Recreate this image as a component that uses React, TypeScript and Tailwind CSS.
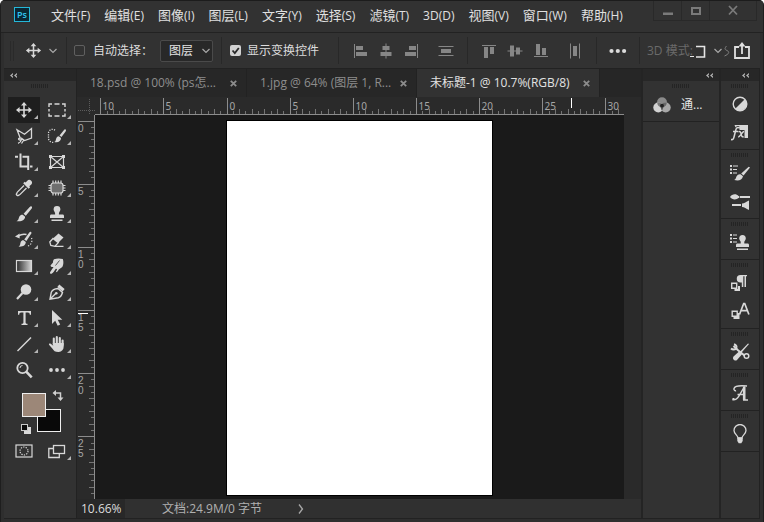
import React from 'react';

const menus = [
  { id: 1, name: '文件', key: '(F)' },
  { id: 2, name: '编辑', key: '(E)' },
  { id: 3, name: '图像', key: '(I)' },
  { id: 4, name: '图层', key: '(L)' },
  { id: 5, name: '文字', key: '(Y)' },
  { id: 6, name: '选择', key: '(S)' },
  { id: 7, name: '滤镜', key: '(T)' },
  { id: 8, name: '', key: '3D(D)' },
  { id: 9, name: '视图', key: '(V)' },
  { id: 10, name: '窗口', key: '(W)' },
  { id: 11, name: '帮助', key: '(H)' },
];

const docTabs = [
  { id: 1, title: '18.psd @ 100% (ps怎...', active: false, width: 'w-[170px]' },
  { id: 2, title: '1.jpg @ 64% (图层 1, R...', active: false, width: 'w-[170px]' },
  { id: 3, title: '未标题-1 @ 10.7%(RGB/8)', active: true, width: 'w-[183px]' },
];

type IconProps = { children: React.ReactNode; className?: string };

const Icon = ({ children, className = 'size-5' }: IconProps) => (
  <svg viewBox="0 0 20 20" className={className} fill="currentColor" stroke="none" aria-hidden="true">
    {children}
  </svg>
);

const MoveIcon = ({ className }: { className?: string }) => (
  <Icon className={className}>
    <path d="M9.2 5h1.6v4.2H15v1.6h-4.2V15H9.2v-4.200H5V9.200h4.200z" />
    <path d="M10 2l3 3.600H7zM10 18l3-3.600H7zM2 10l3.600-3v6zM18 10l-3.600-3v6z" />
  </Icon>
);

const Brush = () => (
  <>
    <path d="M17.600 2.400c.8.6.5 1.500-.1 2.300l-5.700 7-2.200-1.900 6.100-6.900c.6-.7 1.300-1 1.900-.5z" />
    <path d="M8.800 10.700l2.300 2c-.1 3-3 5.300-8.600 4.500 2.400-.9 1.900-2.700 2.900-4.600.8-1.500 2-2.100 3.400-1.900z" />
  </>
);

const Stamp = () => (
  <>
    <path d="M10 2a3.400 3.400 0 0 1 3.400 3.400c0 1.600-1.500 2.500-1.500 4v1.200h3.600c1 0 1.500.6 1.500 1.500V14H3v-1.900c0-.9.500-1.500 1.500-1.500h3.600V9.400c0-1.500-1.500-2.400-1.500-4A3.400 3.400 0 0 1 10 2z" />
    <path d="M4.500 15.500h11V17h-11z" />
  </>
);

const tools = [
  { id: 'move', more: true, icon: <MoveIcon /> },
  {
    id: 'marquee',
    more: true,
    icon: (
      <Icon>
        <path d="M2 7V4h3M7.500 4h5M15 4h3v3M18 9v2.500M18 13.500V16h-3M12.500 16h-5M5 16H2v-2.500M2 11.500V9" fill="none" stroke="currentColor" strokeWidth="1.400" />
      </Icon>
    ),
  },
  {
    id: 'lasso',
    more: true,
    icon: (
      <Icon>
        <path d="M6.500 12.800L3 3.800l7.500 4.400L17.500 2.500v9.500l-7 2.500-2.600-1.900M8 12.600c-1.500-1.300-3.800-.5-3.400.7.400 1.200 3.400.7 3.700-.4M7.300 14c-.3 1.600-1.300 2.700-3.300 3.300M9.500 14.500L7.500 17.500" fill="none" stroke="currentColor" strokeWidth="1.300" />
      </Icon>
    ),
  },
  {
    id: 'quick-select',
    more: true,
    icon: (
      <Icon>
        <path d="M8 4.200A4 4 0 0 0 1.500 7v5a4.300 4.300 0 0 0 5 4.300" fill="none" stroke="currentColor" strokeWidth="1.300" strokeDasharray="1.200 1.200" />
        <path d="M18.600 3.500c.7.500.4 1.300 0 2l-4.100 5.600-2-1.700 4.500-5.500c.5-.6 1.100-.8 1.600-.4z" />
        <path d="M11.800 10.200l2.200 1.900c0 3-2.600 4.900-6.800 4 1.800-.8 1.400-2.100 2.100-3.900.5-1.300 1.300-2 2.500-2z" />
      </Icon>
    ),
  },
  {
    id: 'crop',
    more: true,
    icon: (
      <Icon>
        <path d="M1 4.800h3M6.500 1.500v13h7.500M8.500 4.800h5.700V18M16 14.500h2.500" fill="none" stroke="currentColor" strokeWidth="2" />
      </Icon>
    ),
  },
  {
    id: 'frame',
    more: false,
    icon: (
      <Icon>
        <path d="M3.500 4.500h13v11h-13zM3.500 4.500l13 11M16.500 4.500l-13 11" fill="none" stroke="currentColor" strokeWidth="1.200" />
        <path d="M2 3h3v3H2zM15 3h3v3h-3zM2 14h3v3H2zM15 14h3v3h-3z" />
      </Icon>
    ),
  },
  {
    id: 'eyedropper',
    more: true,
    icon: (
      <Icon>
        <path d="M17.200 2.800c1.400 1.300 1 3-.2 4l-1.700 1.500.8.9-1.500 1.500-5.400-5.400 1.500-1.500.9.800 1.500-1.700c1.100-1.200 2.800-1.500 4.100-.1z" />
        <path d="M10 7.500l-6.400 6.400c-.7.7-.6 1.500-1.300 2.300.3.900.7 1.200 1.500 1.500.8-.7 1.600-.6 2.300-1.300l6.400-6.400" fill="none" stroke="currentColor" strokeWidth="1.300" />
      </Icon>
    ),
  },
  {
    id: 'patch',
    more: true,
    icon: (
      <Icon>
        <rect x="4" y="5" width="12" height="10" rx="2.500" fill="#6e6e6e" stroke="currentColor" strokeWidth="1.200" />
        <path d="M6 2.500V5M8.700 2.500V5M11.300 2.500V5M14 2.500V5M6 15v2.500M8.700 15v2.500M11.300 15v2.500M14 15v2.500M1.500 7.500H4M1.500 10H4M1.500 12.500H4M16 7.500h2.500M16 10h2.500M16 12.500h2.500" fill="none" stroke="currentColor" strokeWidth="1.200" />
      </Icon>
    ),
  },
  { id: 'brush', more: true, icon: <Icon><Brush /></Icon> },
  { id: 'stamp', more: true, icon: <Icon><Stamp /></Icon> },
  {
    id: 'history-brush',
    more: true,
    icon: (
      <Icon>
        <path d="M17 2c.8.500.5 1.300 0 2.100l-4.600 7-2.200-1.700 5.100-6.900c.5-.6 1.100-.9 1.700-.5z" />
        <path d="M9.500 10.200l2.300 1.800c-.1 3.200-2.800 5-7.300 4.600 2.100-1 1.400-2.700 2.200-4.600.6-1.300 1.500-1.900 2.800-1.800z" />
        <path d="M4.500 6c3-2.200 5.500-2 8-1.500" fill="none" stroke="currentColor" strokeWidth="1.300" />
        <path d="M1 6.500L5.600 3.500v5z" />
        <path d="M17.500 8c.8 2.500.5 6.500-3.500 8" fill="none" stroke="currentColor" strokeWidth="1.300" strokeDasharray="1.200 1.600" />
      </Icon>
    ),
  },
  {
    id: 'eraser',
    more: true,
    icon: (
      <Icon>
        <path d="M11.500 3.500l5 4-5.200 5.200-5.300-4.200z" />
        <path d="M6 8.500L2.800 12l1 3.500 4.200.8 3.300-3.600z" fill="none" stroke="currentColor" strokeWidth="1.300" />
        <path d="M8 15.800h8.500V17H7z" />
      </Icon>
    ),
  },
  {
    id: 'gradient',
    more: true,
    icon: (
      <Icon>
        <defs>
          <linearGradient id="tool-gradient">
            <stop offset="0" stopColor="#2a2a2a" />
            <stop offset="1" stopColor="#d6d6d6" />
          </linearGradient>
        </defs>
        <rect x="2.500" y="4.500" width="15" height="11" fill="url(#tool-gradient)" stroke="currentColor" strokeWidth="1.200" />
      </Icon>
    ),
  },
  {
    id: 'smudge',
    more: true,
    icon: (
      <Icon>
        <path d="M7 3.200C10 2 13.500 2.300 15.800 3c1 2.500.7 6-.5 8l-3.500 2.500c-.8 1.600-1.700 2.600-3 2.700l1.300-3.300-1.200-.2c-1.400 1.600-2.300 4-4.300 5-1.300.5-2-.5-1.400-1.700l3.300-5c-1.800.2-2.700-.3-3-1.500L6 6.500c0-1.300.2-2.500 1-3.300z" />
        <path d="M12.500 4.500l-4 5" fill="none" stroke="#323232" strokeWidth=".8" />
      </Icon>
    ),
  },
  {
    id: 'dodge',
    more: true,
    icon: (
      <Icon>
        <circle cx="12" cy="7.500" r="5.300" />
        <path d="M8.500 11L3 17" stroke="currentColor" strokeWidth="2.200" />
      </Icon>
    ),
  },
  {
    id: 'pen',
    more: true,
    icon: (
      <Icon>
        <path d="M11 6.500l4.500 4c-.8 2.800-2 4.700-4.200 5.300L3 17.200l1.300-7c1-2.300 3.500-3.500 6.700-3.700zM3.200 17l5.500-5.500" fill="none" stroke="currentColor" strokeWidth="1.400" />
        <circle cx="9.300" cy="11.200" r="1.300" />
        <path d="M12.300 2.500l5.300 4.500-2 2.500L10.300 5z" />
      </Icon>
    ),
  },
  {
    id: 'type',
    more: true,
    icon: (
      <Icon>
        <path d="M4 3h13v3.800h-1.200c-.1-1.600-.6-2.300-2-2.300h-2.200v9.900c0 .9.500 1.300 1.900 1.400V17h-6v-1.200c1.400-.1 1.900-.5 1.900-1.400V4.500H7.200c-1.400 0-1.900.7-2 2.300H4z" />
      </Icon>
    ),
  },
  {
    id: 'path-select',
    more: true,
    icon: (
      <Icon>
        <path d="M5 2v14l3.200-3.200 2.500 5 2.500-1.200-2.500-4.800h4.600z" />
      </Icon>
    ),
  },
  {
    id: 'line',
    more: true,
    icon: (
      <Icon>
        <path d="M3.500 17L17 3.500" stroke="currentColor" strokeWidth="1.400" />
      </Icon>
    ),
  },
  {
    id: 'hand',
    more: true,
    icon: (
      <Icon>
        <path d="M6.800 10.500V4.500M9.800 10V3M12.800 10V4M15.600 11V6.500" fill="none" stroke="currentColor" strokeWidth="2.100" strokeLinecap="round" />
        <path d="M5.700 9h11v3.500c0 3.200-2 5.300-5 5.500-3.500.1-5-1.300-6.200-3.300L2 10.700c-.4-1 .8-1.700 1.700-1l2.600 2z" />
      </Icon>
    ),
  },
  {
    id: 'zoom',
    more: false,
    icon: (
      <Icon>
        <circle cx="8.500" cy="8" r="5.200" fill="none" stroke="currentColor" strokeWidth="1.800" />
        <path d="M6 8a2.500 2.500 0 0 1 2.500-2.500" fill="none" stroke="currentColor" strokeWidth="1" />
        <path d="M12.200 11.700l5.500 5.600" stroke="currentColor" strokeWidth="2.600" />
      </Icon>
    ),
  },
  {
    id: 'more',
    more: true,
    icon: (
      <Icon>
        <circle cx="4" cy="10" r="1.900" />
        <circle cx="10" cy="10" r="1.900" />
        <circle cx="16" cy="10" r="1.900" />
      </Icon>
    ),
  },
];

const alignLeft = [
  { id: 'align-left', d: 'M3 3h1v14H3zM5 5h7v4H5zM5 11h11v4H5z' },
  { id: 'align-center', d: 'M9.500 2.500h1v15h-1zM6.500 5h7v4h-7zM4.500 11h11v4h-11z' },
  { id: 'align-right', d: 'M16 3h1v14h-1zM8 5h7v4H8zM4 11h11v4H4z' },
];

const alignTop = [
  { id: 'align-top', d: 'M3 4h14v1H3zM5 6h4v11H5zM11 6h4v7h-4z' },
  { id: 'align-middle', d: 'M2.500 9.500h15v1h-15zM5 4.500h4v11H5zM11 6.500h4v7h-4z' },
  { id: 'align-bottom', d: 'M3 15h14v1H3zM5 3h4v11H5zM11 7h4v7h-4z' },
];

const panelGroups = [
  {
    id: 'adjust',
    items: [
      {
        id: 'adjustments',
        icon: (
          <Icon>
            <circle cx="10" cy="10" r="6.800" fill="none" stroke="currentColor" strokeWidth="1.400" />
            <path d="M14.800 5.200a6.800 6.800 0 0 1-9.600 9.600z" />
          </Icon>
        ),
      },
      {
        id: 'styles',
        icon: (
          <Icon>
            <path d="M4.500 3H18v13h-3.500V8H9.500V6.500H6z" />
            <path d="M1 17.500c1.800.5 2.500-.5 3-2.500L5.800 8c.5-2 1.500-2.800 3.200-2.300M3 9.500h5M8.500 9.700c1.800-.5 2.300.3 2.700 2.500s1 3 2.500 2.500M14 9.600c-2 .2-3.500 5.200-5.800 5.300" fill="none" stroke="#323232" strokeWidth="3" />
            <path d="M1 17.500c1.800.5 2.500-.5 3-2.500L5.800 8c.5-2 1.500-2.800 3.200-2.300M3 9.500h5M8.500 9.700c1.800-.5 2.300.3 2.700 2.500s1 3 2.500 2.500M14 9.600c-2 .2-3.500 5.200-5.800 5.300" fill="none" stroke="currentColor" strokeWidth="1.500" />
          </Icon>
        ),
      },
    ],
  },
  {
    id: 'brushes',
    items: [
      {
        id: 'brush-settings',
        icon: (
          <svg viewBox="0 0 22 20" className="h-5 w-[22px]" fill="currentColor" aria-hidden="true">
            <path d="M1 2h2v2H1zM4 2.500h5v1H4zM1 5.500h2v2H1zM4 6h4v1H4zM1 9h2v2H1zM4 9.500h4v1H4z" />
            <path d="M21 4.500l-6.500 8-2.300-2 7.500-6.700z" />
            <path d="M11.500 11.200l2.500 2.100c-1 4-4.500 4.700-8.800 3.700 1.800-.7 1.500-2 2.400-3.700.9-1.700 2.300-2.400 3.900-2.100z" />
          </svg>
        ),
      },
      {
        id: 'brush-presets',
        icon: (
          <Icon>
            <path d="M0 6c2-3.500 6.500-3.500 8.500-1h.8v2h-.8C6.500 9 2 9 0 6zM10 5h10v2H10zM2 13h9v2H2zM12 12.500c2.500 0 4-1.500 7-3v9.500c-3-1.300-4.500-3-7-3z" />
          </Icon>
        ),
      },
    ],
  },
  {
    id: 'clone',
    items: [
      {
        id: 'clone-source',
        icon: (
          <svg viewBox="0 0 22 20" className="h-5 w-[22px]" fill="currentColor" aria-hidden="true">
            <path d="M1 2h2v2H1zM4 2.500h4v1H4zM1 5.500h2v2H1zM4 6h4v1H4zM1 9h2v2H1zM4 9.500h4v1H4z" />
            <path d="M13.500 3a3.400 3.400 0 0 1 3.300 3.400c0 1.500-1.500 2.300-1.500 3.600v1.500h3.200c1 0 1.500.6 1.500 1.500v2H7v-2c0-.9.500-1.500 1.500-1.500h3.200V10c0-1.300-1.500-2.100-1.500-3.600A3.400 3.400 0 0 1 13.500 3zM8 16.500h11V18H8z" />
          </svg>
        ),
      },
    ],
  },
  {
    id: 'text',
    items: [
      {
        id: 'paragraph-styles',
        icon: (
          <Icon>
            <path d="M10.500 2H17v1.200h-1V14h-1.500V3.200h-1.200V14h-1.500V9.500h-1.300a3.700 3.700 0 0 1 0-7.500z" />
            <path d="M5 13h5v5H4.500v-2H8v-3z" />
            <path d="M1.700 10.200h5v5h-5z" fill="none" stroke="currentColor" strokeWidth="1.400" />
          </Icon>
        ),
      },
      {
        id: 'character-styles',
        icon: (
          <Icon>
            <path d="M9.500 13.500L13.700 2.500h1l4.200 11M11 9.700h6.400" fill="none" stroke="currentColor" strokeWidth="1.700" />
            <path d="M7 12h2.500v6H3.500v-2H7z" />
            <path d="M2.200 10.200h5v5h-5z" fill="none" stroke="currentColor" strokeWidth="1.400" />
          </Icon>
        ),
      },
    ],
  },
  {
    id: 'presets',
    items: [
      {
        id: 'tool-presets',
        icon: (
          <Icon>
            <path d="M19 2l-8.300 9.500-1.200-1.200L18 1.500z" />
            <path d="M9 9.500l3 2.800-5 5.700c-2 1.700-5.300-1-3.500-3.500z" />
            <path d="M3.500 4L8 8.300l6.500 5.200" fill="none" stroke="currentColor" strokeWidth="2" />
            <path d="M1 6.500c1.500 1.300 4.500 1.300 5.300-.3C7 4.600 6 2.800 4 2.200" fill="none" stroke="currentColor" strokeWidth="2" />
            <circle cx="16.500" cy="14" r="2.300" fill="none" stroke="currentColor" strokeWidth="1.500" />
          </Icon>
        ),
      },
    ],
  },
  {
    id: 'glyph',
    items: [
      {
        id: 'glyphs',
        icon: (
          <Icon>
            <path d="M2.500 16.800c3 .6 5-1.300 6.700-4.200l5-8.600M14.300 3.500v13M13 17h5M7.500 11.500h7M17 3c-5-.5-12-.8-13 2.500-.4 1.700 1 2.500 2 2" fill="none" stroke="currentColor" strokeWidth="1.400" />
            <path d="M12.900 4h2.600v13h-2.600zM2.500 15h2v2h-2z" />
          </Icon>
        ),
      },
    ],
  },
  {
    id: 'learn',
    items: [
      {
        id: 'tips',
        icon: (
          <Icon>
            <path d="M8 14c0-2.500-4-4-4-7.500a6 6 0 0 1 12 0c0 3.500-4 5-4 7.500z" fill="none" stroke="currentColor" strokeWidth="1.300" />
            <path d="M7.300 13.500h5.400V17l-1.400 2.300H8.700L7.300 17z" />
          </Icon>
        ),
      },
    ],
  },
];

const Grip = () => (
  <svg className="mx-auto mt-[3px] block h-1 w-[18px]" aria-hidden="true">
    <path d="M0 2h18" stroke="#242424" strokeWidth="4" strokeDasharray="1 1" />
  </svg>
);

const Collapse = () => (
  <svg viewBox="0 0 7 5" className="h-[5px] w-[7px]" fill="#b4b4b4" aria-hidden="true">
    <path d="M3 0v1.500l-1 1 1 1V5L0 2.500zM7 0v1.500l-1 1 1 1V5L4 2.500z" />
  </svg>
);

const Chevron = () => (
  <svg viewBox="0 0 8 6" className="h-[6px] w-2" fill="none" stroke="#a8a8a8" strokeWidth="1.200" aria-hidden="true">
    <path d="M.5 1L4 4.500 7.500 1" />
  </svg>
);

// one ruler unit is 12.63px, a half unit tick sits between two units
const UNIT = 12.63;

const HorizontalRuler = () => {
  const ticks = [];
  for (let i = -20; i <= 62; i++) {
    const x = Math.floor(132 + (i * UNIT) / 2) + 0.5;
    const major = i % 10 === 0;
    ticks.push(
      <g key={i}>
        <path d={`M${x} ${major ? 1 : i % 2 === 0 ? 12 : 14}V17`} stroke={major ? '#8c8c8c' : '#747474'} />
        {major && (
          <text x={x + 2} y="13" fontSize="10" fill="#a6a6a6">{Math.abs(i / 2)}</text>
        )}
      </g>
    );
  }
  return (
    <svg className="block h-[18px] w-full overflow-hidden bg-[#2a2a2a]" fontFamily="Noto Sans, sans-serif">
      {ticks}
      <path d="M0 17.500h2000" stroke="#8c8c8c" />
      <path d="M476.500 1v10" stroke="#ffffff" />
    </svg>
  );
};

const VerticalRuler = () => {
  const ticks = [];
  for (let i = -1; i <= 59; i++) {
    const y = Math.floor(6 + (i * UNIT) / 2) + 0.5;
    const major = i % 10 === 0;
    ticks.push(
      <g key={i}>
        <path d={`M${major ? 1 : i % 2 === 0 ? 12 : 14} ${y}H17`} stroke={major ? '#8c8c8c' : '#747474'} />
        {major && String(i / 2).split('').map((n, k) => (
          <text key={k} x="1" y={y + 10 + k * 10} fontSize="10" fill="#a6a6a6">{n}</text>
        ))}
      </g>
    );
  }
  return (
    <svg className="block h-full w-[18px] overflow-hidden bg-[#2a2a2a]" fontFamily="Liberation Sans, sans-serif">
      {ticks}
      <path d="M17.500 0v2000" stroke="#8c8c8c" />
      <path d="M1 198.500h10" stroke="#ffffff" />
    </svg>
  );
};

const TitleBar = () => (
  <header className="flex h-[33px] shrink-0 items-start border-t border-b border-t-[#1c1c1c] border-b-[#222222] bg-[#323232] pr-[6px] pl-[13px]">
    <div className="mt-[6px] flex h-[15px] w-4 items-center justify-center border border-[#25b7d8] bg-[#0a2733] text-[9px] leading-none font-semibold text-[#31c5f0]">
      Ps
    </div>
    <nav className="ml-[21px] flex gap-[14px] text-[13px] leading-[28px] whitespace-nowrap text-[#e0e0e0]">
      {menus.map((menu) => (
        <button key={menu.id} type="button">
          {menu.name}
          <span className="text-xs">{menu.key}</span>
        </button>
      ))}
    </nav>
    <div className="ml-auto flex h-5 border-x border-b border-[#292929] text-[#7a7a7a]">
      <button type="button" aria-label="最小化" className="flex w-7 items-center justify-center border-r border-[#292929]">
        <svg viewBox="0 0 20 20" className="size-5" fill="currentColor"><path d="M5 11.500h10V14H5z" /></svg>
      </button>
      <button type="button" aria-label="最大化" className="flex w-7 items-center justify-center border-r border-[#292929]">
        <svg viewBox="0 0 20 20" className="size-5" fill="none" stroke="currentColor" strokeWidth="2"><path d="M6 7h8v6H6z" /></svg>
      </button>
      <button type="button" aria-label="关闭" className="flex w-[46px] items-center justify-center">
        <svg viewBox="0 0 20 20" className="size-5" stroke="currentColor" strokeWidth="1.800"><path d="M6 5l8 8.500M14 5l-8 8.500" /></svg>
      </button>
    </div>
  </header>
);

const OptionsBar = () => (
  <section className="flex h-9 shrink-0 items-center border-b border-[#222222] bg-[#323232] text-xs text-[#dcdcdc]">
    <div className="flex h-[27px] w-[63px] shrink-0 items-center border-r border-[#282828]">
      <span className="ml-[6px] h-5 w-1 border-x border-[#2a2a2a]" />
      <button type="button" aria-label="移动工具" className="ml-[10px] text-[#d8d8d8]"><MoveIcon className="size-[19px]" /></button>
      <button type="button" aria-label="工具预设" className="ml-[6px]"><Chevron /></button>
    </div>
    <div className="flex h-[27px] w-[155px] shrink-0 items-center border-r border-[#282828]">
      <label className="ml-[7px] flex items-center gap-2 whitespace-nowrap">
        <input type="checkbox" className="size-[11px] appearance-none rounded-[2px] border border-[#606060]" />
        <span className="w-[56px]">自动选择：</span>
      </label>
      <div className="relative ml-[11px] flex items-center">
        <select aria-label="自动选择对象" className="h-[22px] w-[53px] appearance-none rounded-[2px] border border-[#4a4a4a] bg-[#282828] pl-2 text-xs text-[#e4e4e4]">
          <option>图层</option>
        </select>
        <span className="pointer-events-none absolute right-[3px]"><Chevron /></span>
      </div>
    </div>
    <div className="flex h-[27px] w-[117px] shrink-0 items-center border-r border-[#282828]">
      <label className="ml-2 flex items-center gap-[6px] whitespace-nowrap">
        <span className="relative flex items-center">
          <input type="checkbox" defaultChecked className="size-[11px] appearance-none rounded-[2px] bg-[#d2d2d2]" />
          <svg viewBox="0 0 11 11" className="pointer-events-none absolute size-[11px]" fill="none" stroke="#2a2a2a" strokeWidth="1.800"><path d="M2.500 5.500L4.800 8l4-5" /></svg>
        </span>
        显示变换控件
      </label>
    </div>
    <div className="flex h-[27px] w-[129px] shrink-0 items-center gap-[5px] border-r border-[#282828] pl-3 text-[#868686]">
      {alignLeft.map((a) => (
        <button key={a.id} type="button" aria-label={a.id}><Icon><path d={a.d} /></Icon></button>
      ))}
      <button type="button" aria-label="distribute-vertical" className="ml-[10px]">
        <Icon><path d="M2.500 5h15v1h-15zM5 8h10v4H5zM2.500 14h15v1h-15z" /></Icon>
      </button>
    </div>
    <div className="flex h-[27px] w-[129px] shrink-0 items-center gap-[6px] border-r border-[#282828] pl-[11px] text-[#868686]">
      {alignTop.map((a) => (
        <button key={a.id} type="button" aria-label={a.id}><Icon><path d={a.d} /></Icon></button>
      ))}
      <button type="button" aria-label="distribute-horizontal" className="ml-2">
        <Icon><path d="M5 2.500h1v15H5zM8 5h4v10H8zM14 2.500h1v15h-1z" /></Icon>
      </button>
    </div>
    <div className="flex h-[27px] w-[43px] shrink-0 items-center justify-center border-r border-[#282828]">
      <button type="button" aria-label="对齐选项">
        <Icon>
          <circle cx="3.500" cy="10" r="2.100" />
          <circle cx="9.800" cy="10" r="2.100" />
          <circle cx="16.100" cy="10" r="2.100" />
        </Icon>
      </button>
    </div>
    <div className="flex min-w-0 flex-1 items-center pl-[7px] text-[#6a6a6a]">
      <span className="w-[43px] shrink-0 whitespace-nowrap">3D 模式:</span>
      <svg viewBox="0 0 16 16" className="size-4 shrink-0" fill="none" stroke="#e6e6e6" strokeWidth="1.600" aria-hidden="true">
        <path d="M6 3.500h8.500V14H6" />
        <path d="M0 13.500h4" strokeWidth="1" />
      </svg>
      <span className="ml-2 shrink-0"><Chevron /></span>
      <svg viewBox="0 0 8 12" className="h-3 w-2 shrink-0" fill="none" stroke="#808080" aria-hidden="true">
        <path d="M4.500 1c-2 2.500-2 3.500.5 4.500 3 1.500 2 3.500-2.500 5.500" />
      </svg>
      <button type="button" aria-label="共享" className="ml-auto pr-[9px] text-[#e0e0e0]">
        <svg viewBox="0 0 18 18" className="size-[18px]" fill="none" stroke="currentColor" strokeWidth="1.800">
          <path d="M6 5H2v11h14V5h-4M9 12V3" />
          <path d="M5.500 4.500L9 0l3.500 4.500z" fill="currentColor" stroke="none" />
        </svg>
      </button>
    </div>
  </section>
);

const ToolPanel = () => (
  <aside className="flex w-[73px] shrink-0 flex-col border-r border-[#222222] bg-[#323232] text-[#d8d8d8]">
    <div className="flex h-3 items-center bg-[#272727] pl-[6px]"><Collapse /></div>
    <Grip />
    <div className="mt-[9px] ml-1 grid grid-cols-[33px_33px]">
      {tools.map((tool) => (
        <button
          key={tool.id}
          type="button"
          aria-label={tool.id}
          className={tool.id === 'move'
            ? 'relative flex h-[26px] w-8 items-center justify-center bg-[#1e1e1e]'
            : 'relative flex h-[26px] w-8 items-center justify-center'}
        >
          {tool.icon}
          {tool.more && (
            <svg viewBox="0 0 4 4" className="absolute right-[2px] bottom-1 size-1" fill="#b4b4b4"><path d="M4 0v4H0z" /></svg>
          )}
        </button>
      ))}
    </div>
    <svg viewBox="0 0 48 46" className="mt-[5px] ml-[15px] h-[46px] w-12" aria-label="前景色和背景色">
      <path d="M36.500 5H41.500v5" fill="none" stroke="#d0d0d0" strokeWidth="1.500" />
      <path d="M37 2v6l-3.500-3zM38.500 9.500h6l-3 3.500z" fill="#d0d0d0" />
      <rect x="18.500" y="21.500" width="23" height="22" fill="#090909" stroke="#eeeeee" />
      <rect x="3.500" y="5.500" width="23" height="23" fill="#9c8778" stroke="#eeeeee" />
      <path d="M9 39h3v7H5v-3h4z" fill="#d8d8d8" />
      <rect x="2.500" y="36.500" width="6" height="6" fill="#0a0a0a" stroke="#c8c8c8" />
    </svg>
    <div className="mt-1 ml-1 grid grid-cols-[33px_33px]">
      <button type="button" aria-label="快速蒙版" className="flex h-[26px] w-8 items-center justify-center">
        <Icon>
          <rect x="2" y="4" width="16" height="12" fill="none" stroke="currentColor" strokeWidth="1.200" />
          <circle cx="10" cy="10" r="4" fill="none" stroke="currentColor" strokeWidth="1.200" strokeDasharray="1.300 1.210" />
        </Icon>
      </button>
      <button type="button" aria-label="屏幕模式" className="relative flex h-[26px] w-8 items-center justify-center">
        <Icon>
          <path d="M6 7.500H1.800v9h10.500V13" fill="none" stroke="currentColor" strokeWidth="1.300" />
          <rect x="6.500" y="4.500" width="11" height="8" fill="none" stroke="currentColor" strokeWidth="1.300" />
        </Icon>
        <svg viewBox="0 0 4 4" className="absolute right-[2px] bottom-1 size-1" fill="#b4b4b4"><path d="M4 0v4H0z" /></svg>
      </button>
    </div>
  </aside>
);

const Workspace = () => (
  <main className="flex min-w-0 flex-1 flex-col bg-[#262626]">
    <div className="flex h-7 shrink-0 text-xs">
      {docTabs.map((tab) => (
        <div
          key={tab.id}
          className={`flex items-center justify-between border-r border-[#222222] pr-[9px] pl-[13px] whitespace-nowrap ${tab.width} ${
            tab.active ? 'bg-[#323232] text-[#e2e2e2]' : 'bg-[#272727] text-[#8e8e8e]'
          }`}
        >
          <button type="button">{tab.title}</button>
          <button type="button" aria-label="关闭">
            <svg viewBox="0 0 7 7" className="size-[7px]" stroke="#8c8c8c" strokeWidth="1.800"><path d="M.8.8l5.400 5.400M6.200.8L.8 6.200" /></svg>
          </button>
        </div>
      ))}
    </div>
    <div className="grid min-h-0 flex-1 grid-cols-[18px_1fr_17px] grid-rows-[18px_1fr_19px]">
      <svg className="block size-[18px] bg-[#2a2a2a]">
        <path d="M12.500 2v16M1 13.500h17" stroke="#5c5c5c" strokeDasharray="1 1" />
      </svg>
      <HorizontalRuler />
      <div className="bg-[#2a2a2a]" />
      <VerticalRuler />
      <div className="flex items-center justify-center bg-[#1a1a1a] pt-[2px]">
        <div className="aspect-[265/374] h-[374px] bg-white outline outline-black" />
      </div>
      <div className="bg-[#2a2a2a]" />
      <div className="col-span-3 flex min-h-0 items-center bg-[#2c2c2c] text-xs">
        <input aria-label="缩放" defaultValue="10.66%" className="h-full w-12 bg-[#282828] pl-1 text-[#dcdcdc]" />
        <div className="flex h-full flex-1 items-center bg-[#303030] pl-[37px] text-[#b0b0b0]">
          <span className="w-[136px] whitespace-nowrap">文档:24.9M/0 字节</span>
          <button type="button" aria-label="状态信息">
            <svg viewBox="0 0 6 10" className="h-[10px] w-[6px]" fill="none" stroke="#a8a8a8" strokeWidth="1.300"><path d="M1 .5L4.500 5 1 9.500" /></svg>
          </button>
        </div>
      </div>
    </div>
  </main>
);

const SidePanels = () => (
  <>
    <aside className="flex w-20 shrink-0 flex-col border-x-2 border-[#242424] bg-[#323232]">
      <div className="flex h-3 shrink-0 items-center justify-end bg-[#272727] pr-[6px]"><Collapse /></div>
      <div className="h-[41px] shrink-0 border-b border-[#222222]">
        <Grip />
        <button type="button" className="mt-[3px] flex h-7 items-center gap-[9px] pl-[9px] text-xs text-[#e4e4e4]">
          <svg viewBox="0 0 20 20" className="size-5" aria-hidden="true">
            <circle cx="10" cy="7.300" r="5" fill="#8a8a8a" />
            <circle cx="6.300" cy="12.500" r="5" fill="#d2d2d2" />
            <circle cx="13.700" cy="12.500" r="5" fill="#a8a8a8" />
            <path d="M10 8.900a5 5 0 0 1 1.200 3.300 5 5 0 0 1-1.200 3.400 5 5 0 0 1-1.200-3.400 5 5 0 0 1 1.200-3.300z" fill="#5e5e5e" />
            <path d="M5.200 7.600a5 5 0 0 1 4.800 1.300l-1.200 3.300a5 5 0 0 1-3.600-4.600z" fill="#777777" />
            <path d="M14.800 7.600a5 5 0 0 0-4.800 1.300l1.200 3.300a5 5 0 0 0 3.600-4.600z" fill="#686868" />
            <circle cx="10" cy="10.700" r="1.900" fill="#222222" />
          </svg>
          <span>通...</span>
        </button>
      </div>
    </aside>
    <aside className="flex w-[39px] shrink-0 flex-col border-r border-[#222222] bg-[#323232] text-[#d8d8d8]">
      <div className="flex h-3 shrink-0 items-center justify-end bg-[#272727] pr-[10px]"><Collapse /></div>
      {panelGroups.map((group) => (
        <div key={group.id} className="border-b border-[#222222] pb-[3px]">
          <Grip />
          <div className="mt-[2px]">
            {group.items.map((item) => (
              <button key={item.id} type="button" aria-label={item.id} className="flex h-7 w-full items-center justify-center">
                {item.icon}
              </button>
            ))}
          </div>
        </div>
      ))}
    </aside>
  </>
);

const App = () => {
  return (
    <div className="h-screen bg-white">
      <div className="flex h-full flex-col overflow-hidden rounded-t-[5px] border-x border-[#1e1e1e] bg-[#2e2e2e] font-['Open_Sans','Noto_Sans_CJK_SC',sans-serif]">
        <TitleBar />
        <div className="mx-[3px] mb-[3px] flex min-h-0 flex-1 flex-col border-b border-[#222222]">
          <OptionsBar />
          <div className="flex min-h-0 flex-1">
            <ToolPanel />
            <Workspace />
            <SidePanels />
          </div>
        </div>
      </div>
    </div>
  );
};

export default App;
